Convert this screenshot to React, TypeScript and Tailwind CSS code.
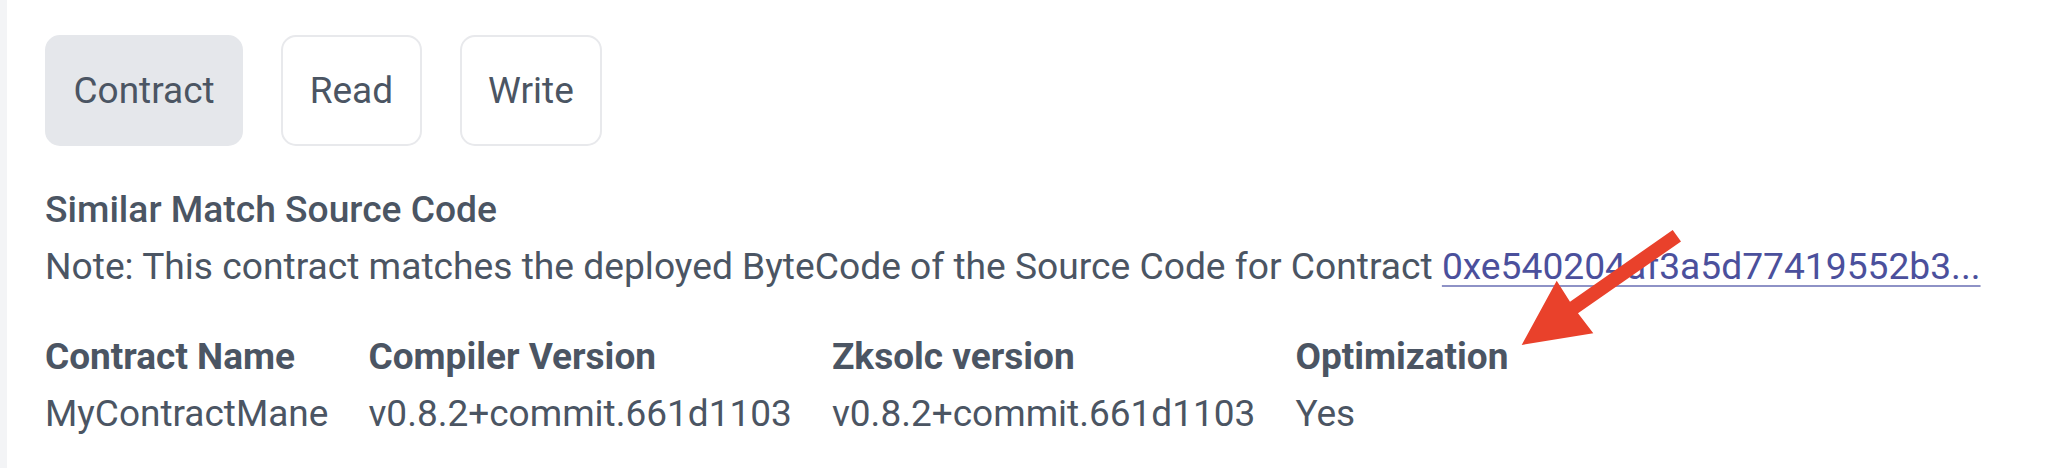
const tabs = ['Contract', 'Read', 'Write'];

const details = [
  { label: 'Contract Name', value: 'MyContractMane' },
  { label: 'Compiler Version', value: 'v0.8.2+commit.661d1103' },
  { label: 'Zksolc version', value: 'v0.8.2+commit.661d1103' },
  { label: 'Optimization', value: 'Yes' },
];

export default function App() {
  const active = 'Contract';

  return (
    <div
      className="relative flex w-[2060px] h-[468px] bg-white overflow-hidden text-[#4b5563]"
      style={{ fontFamily: 'Roboto, "Liberation Sans", sans-serif' }}
    >
      {/* left rail */}
      <div className="w-[7px] shrink-0 bg-[#f3f4f6]" />

      <div className="flex-1 pl-[38px] pt-[35px]">
        {/* Tabs */}
        <div className="flex gap-[38px]">
          {tabs.map((tab) => (
            <button
              key={tab}
              className={`h-[111px] px-[26.5px] rounded-[15px] border-2 text-[37px] leading-none flex items-center ${
                tab === active
                  ? 'bg-[#e5e7eb] border-[#e5e7eb]'
                  : 'bg-white border-[#e8e9ec]'
              }`}
            >
              {tab}
            </button>
          ))}
        </div>

        {/* Source code info */}
        <div className="mt-[35px] text-[37.2px] leading-[57px]">
          <p className="font-medium">Similar Match Source Code</p>
          <p>
            Note: This contract matches the deployed ByteCode of the Source Code for Contract{' '}
            <a
              href="#"
              className="text-[#4b509c] underline decoration-[#8e92c6] decoration-2 underline-offset-[6px]"
            >
              0xe540204af3a5d77419552b3...
            </a>
          </p>
        </div>

        {/* Details */}
        <div className="mt-[33px] flex gap-[40px] text-[37px] leading-[57px]">
          {details.map((d) => (
            <div key={d.label} className="flex flex-col">
              <span className="font-bold">{d.label}</span>
              <span>{d.value}</span>
            </div>
          ))}
        </div>
      </div>

      {/* annotation arrow */}
      <svg
        className="absolute left-[1500px] top-[220px]"
        width="200"
        height="140"
        viewBox="0 0 200 140"
      >
        <polygon
          points="172.7,10 70,81.7 56.7,60.7 21.7,125 93.3,113.3 78,93.2 181,21.5"
          fill="#e9412b"
        />
      </svg>
    </div>
  );
}
